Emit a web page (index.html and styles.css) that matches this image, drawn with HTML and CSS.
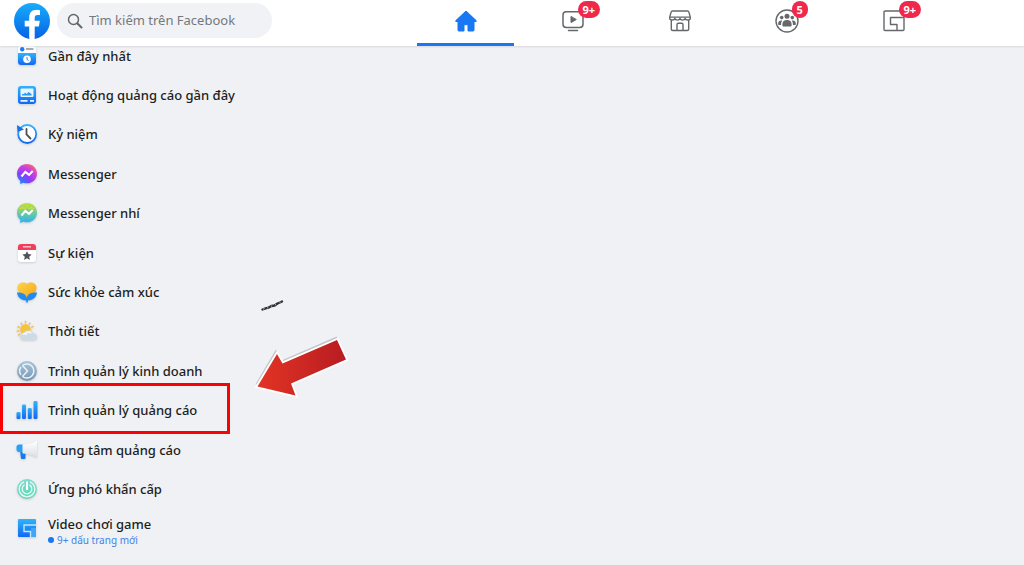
FILE: index.html
```html
<!DOCTYPE html>
<html lang="vi">
<head>
<meta charset="utf-8">
<meta name="viewport" content="width=device-width, initial-scale=1">
<title>Facebook</title>
<link rel="stylesheet" href="styles.css">
</head>
<body>
<svg class="defs" width="0" height="0" aria-hidden="true">
  <defs>
    <linearGradient id="blue" x1="0" y1="0" x2="0" y2="1"><stop offset="0" stop-color="#2fb4fb"/><stop offset="1" stop-color="#1268f3"/></linearGradient>
    <linearGradient id="logo" x1="0" y1="0" x2="0" y2="1"><stop offset="0" stop-color="#18acfb"/><stop offset="1" stop-color="#0563e5"/></linearGradient>
    <radialGradient id="msg" cx=".15" cy="1" r="1.15"><stop offset="0" stop-color="#0a90ff"/><stop offset=".45" stop-color="#8a3cff"/><stop offset=".75" stop-color="#c840e0"/><stop offset="1" stop-color="#ff6a6c"/></radialGradient>
    <linearGradient id="kids" x1="0" y1="0" x2="0" y2="1"><stop offset="0" stop-color="#c6e02a"/><stop offset=".4" stop-color="#7ccf8c"/><stop offset="1" stop-color="#28b2f6"/></linearGradient>
    <linearGradient id="gold" x1="0" y1="0" x2="1" y2="1"><stop offset="0" stop-color="#ffd34a"/><stop offset="1" stop-color="#f5a516"/></linearGradient>
    <linearGradient id="steel" x1="0" y1="0" x2="0" y2="1"><stop offset="0" stop-color="#a9c4da"/><stop offset="1" stop-color="#7797b3"/></linearGradient>
    <linearGradient id="mint" x1="0" y1="0" x2="0" y2="1"><stop offset="0" stop-color="#7fdbd2"/><stop offset="1" stop-color="#5fd6b0"/></linearGradient>
    <linearGradient id="horn" x1="0" y1="0" x2="0" y2="1"><stop offset="0" stop-color="#ffffff"/><stop offset="1" stop-color="#dcdfe3"/></linearGradient>
    <linearGradient id="red" x1="0" y1="0" x2="1" y2="0"><stop offset="0" stop-color="#e23424"/><stop offset="1" stop-color="#b81c22"/></linearGradient>
  </defs>
</svg>

<header class="topbar">
  <div class="brand">
    <a class="logo" href="#" aria-label="Facebook">
      <svg viewBox="0 0 36 36"><circle cx="18" cy="18" r="18" fill="url(#logo)"/><path fill="#fff" d="M15.200 35.800V23.500h-4.500v-5.700h4.500v-3.200c0-5.100 2.800-7.800 7.500-7.800 1.400 0 2.600.2 3.300.4v4.800h-2.400c-2.200 0-2.900 1.100-2.900 2.900v2.900h5.100l-.9 5.700h-4.200v12.300a18 18 0 0 1-5.500 0z"/></svg>
    </a>
    <label class="search">
      <svg viewBox="0 0 16 16" fill="none" stroke="#65676b" stroke-width="1.500" stroke-linecap="round"><circle cx="6.500" cy="6.500" r="5"/><path stroke-width="2" d="M10.500 10.500l4 4"/></svg>
      <input type="search" placeholder="Tìm kiếm trên Facebook" aria-label="Tìm kiếm trên Facebook">
    </label>
  </div>
  <nav class="tabs" aria-label="Chính">
    <a class="tab tab-active" href="#" aria-label="Trang chủ">
      <span class="glyph"><svg viewBox="0 0 24 24"><path fill="#1877f2" stroke="#1877f2" stroke-linejoin="round" d="M12 2L1.800 11.600v.9H4v8.700c0 .5.300.8.800.8H10v-5.500c0-.5.300-.8.800-.8h2.400c.5 0 .8.300.8.800V22h5.200c.5 0 .8-.3.800-.8v-8.700h2.200v-.9z"/></svg></span>
    </a>
    <a class="tab" href="#" aria-label="Video">
      <span class="glyph"><svg viewBox="0 0 24 24" fill="none" stroke="#65676b" stroke-width="1.500" stroke-linecap="round"><rect x="2" y="2.700" width="20" height="15.800" rx="3.200"/><path d="M7.500 21.500h9"/><path fill="#65676b" stroke-linejoin="round" stroke-width="1" d="M10 7.800v5.800l5-2.900z"/></svg><span class="badge">9+</span></span>
    </a>
    <a class="tab" href="#" aria-label="Marketplace">
      <span class="glyph"><svg viewBox="0 0 24 24" fill="none" stroke="#65676b" stroke-width="1.400" stroke-linejoin="round"><path d="M3.300 11v9c0 1 .6 1.500 1.500 1.500h14.400c.9 0 1.500-.5 1.500-1.500v-9M4.500 2h15c.8 0 1.200.4 1.400 1.100l1.400 5v1.200c0 2.200-4.600 2.400-5.200.2-.6 2.200-4.500 2.200-5.100 0-.6 2.200-4.500 2.200-5.100 0-.6 2.200-5.200 2-5.200-.2V8.100l1.400-5C3.300 2.400 3.700 2 4.500 2zM1.700 8.100h20.600M9 21.500v-6c0-.8.400-1.200 1.200-1.200h3.600c.8 0 1.200.4 1.200 1.200v6"/></svg></span>
    </a>
    <a class="tab" href="#" aria-label="Nhóm">
      <span class="glyph"><svg viewBox="0 0 24 24"><circle cx="12" cy="12" r="11" fill="none" stroke="#65676b" stroke-width="1.400"/><g fill="#65676b"><circle cx="12" cy="7.200" r="2.500"/><circle cx="6.700" cy="8.600" r="1.800"/><circle cx="17.300" cy="8.600" r="1.800"/><path d="M7.400 16.500v-1.600c0-2.400 1.900-4 4.600-4s4.600 1.600 4.600 4v1.600c0 .6-.3.900-.9.900H8.300c-.6 0-.9-.3-.9-.9zM6.300 11.400c-2 0-3.100 1.200-3.100 3v.9c0 .4.200.6.600.6h2.300c0-1.700.1-3 1.300-4.400zM17.700 11.400c2 0 3.100 1.200 3.100 3v.9c0 .4-.2.600-.6.600h-2.300c0-1.700-.1-3-1.300-4.400z"/></g></svg><span class="badge">5</span></span>
    </a>
    <a class="tab" href="#" aria-label="Trò chơi">
      <span class="glyph"><svg viewBox="0 0 24 24" fill="none" stroke="#65676b" stroke-width="1.400" stroke-linejoin="round"><path d="M22 8.500V2H3c-.6 0-1 .4-1 1v17.500c0 .6.400 1 1 1h18c.6 0 1-.4 1-1v-12H8.500v7h6.500v6"/></svg><span class="badge">9+</span></span>
    </a>
  </nav>
</header>

<main class="page">
  <nav class="sidebar" aria-label="Lối tắt">
    <ul class="menu">
      <li><a href="#"><svg class="icon" viewBox="0 0 22 22"><rect x="2" y="1" width="18" height="19" rx="3" fill="#fff"/><circle cx="6.200" cy="4.200" r="2.200" fill="#1b7df5"/><path d="M10 4h7.500" stroke="#83878e" stroke-width="1.400"/><path d="M2 8h18v9a3 3 0 0 1-3 3H5a3 3 0 0 1-3-3z" fill="url(#blue)"/><circle cx="11" cy="14.200" r="3.800" fill="#fff"/><path d="M11 12v2.500l1.500 1" stroke="#2385f5" fill="none"/></svg><span>Gần đây nhất</span></a></li>
      <li><a href="#"><svg class="icon" viewBox="0 0 22 22"><rect x="2" y="2" width="18" height="18" rx="3" fill="url(#blue)"/><rect x="4.500" y="4.500" width="13" height="8.500" rx="1" fill="#e8f5ff"/><path d="M6 11.500V10h2l1-1.500 1.500 1.500L12.500 8l3 2v1.500z" fill="#2b99f6"/><path d="M4.500 16.800h7M14 16.800h4" stroke="#e8f5ff" stroke-width="1.800"/></svg><span>Hoạt động quảng cáo gần đây</span></a></li>
      <li><a href="#"><svg class="icon" viewBox="0 0 22 22"><circle cx="11.200" cy="11" r="9" fill="#fff" stroke="url(#blue)" stroke-width="1.800"/><path d="M1 2l.5 7L8 6.500z" fill="#1b6fe8"/><path d="M10.500 6v5.500l4 4" stroke="#4b4f56" stroke-width="1.800" fill="none" stroke-linecap="round"/></svg><span>Kỷ niệm</span></a></li>
      <li><a href="#"><svg class="icon" viewBox="0 0 22 22"><path fill="url(#msg)" d="M11 1C5.300 1 1 5.200 1 10.700c0 2.900 1.200 5.400 3.200 7.100V21l3-1.300c1.200.4 2.400.6 3.800.6 5.700 0 10-4.100 10-9.600S16.700 1 11 1z"/><path d="M5.500 13.500l3.800-4.600 3.700 3 3.700-3.800" fill="none" stroke="#fff" stroke-width="2.100"/></svg><span>Messenger</span></a></li>
      <li><a href="#"><svg class="icon" viewBox="0 0 22 22"><path fill="url(#kids)" d="M11 1C5.300 1 1 5.200 1 10.700c0 2.900 1.200 5.400 3.200 7.100V21l3-1.300c1.200.4 2.400.6 3.800.6 5.700 0 10-4.100 10-9.600S16.700 1 11 1z"/><path d="M4 7l2-2 2 2 3-3 3 3 2-2 2 2" stroke="#e3df35" stroke-width="1.200" stroke-dasharray="2 1" fill="none"/><path d="M5.500 13.500l3.800-4.600 3.700 3 3.700-3.800" fill="none" stroke="#fff" stroke-width="2.100"/></svg><span>Messenger nhí</span></a></li>
      <li><a href="#"><svg class="icon" viewBox="0 0 22 22"><rect x="2" y="2" width="18" height="18" rx="3" fill="#fff"/><path d="M2 8V5a3 3 0 0 1 3-3h12a3 3 0 0 1 3 3v3z" fill="#f03e5e"/><path d="M7 4.800h8" stroke="#ffc4ce" stroke-width="1.400"/><path fill="#505358" d="M11 9.200l1.400 2.900 3.200.4-2.400 2.200.7 3.200-2.900-1.600-2.900 1.600.7-3.200-2.400-2.200 3.200-.4z"/></svg><span>Sự kiện</span></a></li>
      <li><a href="#"><svg class="icon" viewBox="0 0 22 22"><path d="M11 17.500C5 14.500 1.500 11 1.500 6.500 1.500 1.500 8 .2 11 2.700c3-2.500 9.500-1.200 9.500 3.800 0 4.500-3.500 8-9.500 11z" fill="url(#gold)"/><path d="M1 11.500c5-.2 9 1.500 9.700 5.500.7-4 4.300-5.700 10.300-5.500-.5 4.500-3.500 7.800-9 8l-.5 2.300h-1L10 19.500c-5.500-.5-8.500-3.500-9-8z" fill="#208bf1"/></svg><span>Sức khỏe cảm xúc</span></a></li>
      <li><a href="#"><svg class="icon" viewBox="0 0 22 22"><circle cx="9.500" cy="9.500" r="5.400" fill="#f8c33c"/><g stroke="#f4bd4b" stroke-width="1.400"><path d="M9.500.8v2.400M4.800 2.600L6 4.700M1.500 6.500l2.200 1M.8 11h2.400M2 15.300l2-1.300M14.200 2.600L13 4.700M17.500 6.200l-2.200 1.300"/></g><path d="M8 20a3.600 3.600 0 0 1-.2-7.200c.4-2 2.400-3 4.200-2 1.400-1.300 4.600-.4 5 2.400a3.400 3.400 0 0 1 1 6.800z" fill="#cfdbe2"/><path d="M7 14.500c1-1.200 2.300-.8 3-.5.500-2.500 4-3 5-.5" stroke="#f2f6f8" stroke-width="1.800" fill="none"/></svg><span>Thời tiết</span></a></li>
      <li><a href="#"><svg class="icon" viewBox="0 0 22 22"><circle cx="11" cy="11" r="10" fill="url(#steel)"/><path d="M6.500 5.500a7 7 0 1 1 0 11" fill="none" stroke="#eaf2f8" stroke-width="1.500"/><path d="M6.500 5.500l5 5.500-5 5.500M5 7a7 7 0 0 0 0 8" fill="none" stroke="#eaf2f8" stroke-width="1.500"/></svg><span>Trình quản lý kinh doanh</span></a></li>
      <li class="marked"><a href="#"><svg class="icon" viewBox="0 0 22 22" fill="url(#blue)"><rect x=".5" y="13" width="4" height="7" rx="1.300"/><rect x="6" y="5.500" width="4" height="14.500" rx="1.300"/><rect x="11.800" y="9" width="4" height="11" rx="1.300"/><rect x="17.500" y="2" width="4" height="18" rx="1.300"/></svg><span>Trình quản lý quảng cáo</span></a></li>
      <li><a href="#"><svg class="icon" viewBox="0 0 22 22"><path d="M4 10.500h5.500v8.300c0 .8-.5 1.200-1.200 1.200H6.200c-.8 0-1.200-.4-1.400-1.200z" fill="#1877f2"/><path d="M7 5.500H3C1.500 5.500.5 6.500.5 8v2.500c0 1.500 1 2.500 2.500 2.500h4z" fill="#27a0f8"/><path d="M6.500 5.500C12 5.500 16 4.500 21 1.500v17c-5-3-9-4-14.500-4z" fill="url(#horn)"/></svg><span>Trung tâm quảng cáo</span></a></li>
      <li><a href="#"><svg class="icon" viewBox="0 0 22 22"><circle cx="11" cy="11" r="10" fill="url(#mint)"/><g fill="none" stroke="#e6faf4" stroke-width="1.300"><path d="M8 3.800a7.800 7.800 0 1 0 6 0"/><path d="M8.500 6.900a4.800 4.800 0 1 0 5 0"/><path d="M11 3.500v8.500" stroke-width="2" stroke="#fff"/></g></svg><span>Ứng phó khẩn cấp</span></a></li>
      <li><a href="#"><svg class="icon" viewBox="0 0 22 22"><rect x="2" y="2" width="18" height="18" rx="1" fill="url(#blue)"/><path d="M15 14.500v-3.500h5v9h-5z" fill="#41a6f7"/><path d="M20 8H8v6.500h6.500V20" fill="none" stroke="#c6e3fc" stroke-width="1.400"/></svg><span class="stack"><span>Video chơi game</span><span class="note">9+ dấu trang mới</span></span></a></li>
    </ul>
  </nav>
  <svg class="arrow" viewBox="0 0 96 100" aria-hidden="true">
    <path d="M5.500 86.500L25.500 52.500M32 63L86 39.500" fill="none" stroke="#c3c5c9" stroke-width="2"/>
    <path d="M7.500 88.500L27 56l5.500 9.500L87 42l9 19.500-55 24 4.500 12z" transform="translate(-1 0)" fill="url(#red)" stroke="#fff" stroke-width="3.600" paint-order="stroke"/>
    <path d="M11.500 11.500l3-1.200 3-.6 3-1.700 3-.5 3-2 2.500-1 2-1" fill="none" stroke="#303236" stroke-width="2.400" stroke-linecap="round"/>
    <path d="M12 11.200l1.500-.6M16 10l1.200-.5M20 8.300l1.200-.5M24 6.900l1-.5M28.500 4.700l1.200-.5" fill="none" stroke="#c5c7cb" stroke-width=".9"/>
  </svg>
</main>
</body>
</html>
```
FILE: styles.css
```css
*, *::before, *::after { box-sizing: border-box; }

body {
  margin: 0;
  min-height: 100vh;
  display: flex;
  flex-direction: column;
  background: #f0f1f5;
  color: #1c1e21;
  font-family: "Noto Sans", "Open Sans", sans-serif;
  font-size: 13px;
}

a { color: inherit; text-decoration: none; }
.defs { position: absolute; }

.topbar {
  position: sticky;
  top: 0;
  z-index: 2;
  display: grid;
  grid-template-columns: 412fr 535fr 77fr;
  height: 46px;
  background: #fff;
  box-shadow: 0 1px 2px rgba(0, 0, 0, 0.1);
}

.brand {
  display: flex;
  align-items: flex-start;
  gap: 7px;
  padding: 3px 0 0 14px;
}

.logo, .logo svg { display: block; width: 36px; height: 36px; }

.search {
  display: flex;
  align-items: center;
  gap: 6px;
  width: 215px;
  height: 35px;
  padding: 0 10px;
  border-radius: 18px;
  background: #f0f2f5;
}

.search svg { flex: none; width: 16px; height: 16px; }

.search input {
  flex: 1;
  min-width: 0;
  padding: 0 0 1px;
  border: 0;
  outline: 0;
  background: transparent;
  color: #1c1e21;
  font: inherit;
}

.search input::placeholder { color: #75787d; opacity: 1; }

.tabs { display: grid; grid-template-columns: repeat(5, 1fr); }

.tab {
  display: flex;
  align-items: center;
  justify-content: center;
  margin: 0 5px;
  padding-bottom: 2px;
  border-bottom: 3px solid transparent;
}

.tab-active { border-bottom-color: #1877f2; }
.glyph { position: relative; }
.glyph svg { display: block; width: 24px; height: 24px; }

.badge {
  position: absolute;
  left: 17px;
  top: -8px;
  min-width: 16px;
  height: 17px;
  padding: 0 5px;
  border-radius: 9px;
  background: #f02849;
  color: #fff;
  font-size: 11px;
  font-weight: 700;
  line-height: 17px;
  text-align: center;
}

.page {
  position: relative;
  flex: 1;
  display: flex;
}

.sidebar { display: flex; width: 264px; }

.menu {
  flex: 1;
  display: flex;
  flex-direction: column;
  margin: -10px 0 0;
  padding: 0 0 17px;
  list-style: none;
}

.menu li { flex: 1; display: flex; position: relative; }

.menu a {
  flex: 1;
  display: flex;
  align-items: center;
  gap: 10px;
  min-height: 39px;
  padding-left: 16px;
  font-weight: 500;
  line-height: 18px;
  white-space: nowrap;
}

.icon {
  flex: none;
  width: 22px;
  height: 22px;
  filter: drop-shadow(0 1px 1px rgba(0, 0, 0, 0.15));
}

.stack {
  display: flex;
  flex-direction: column;
  padding-top: 6px;
}

.note {
  display: flex;
  align-items: center;
  gap: 3px;
  color: #3f83e8;
  font-size: 10px;
  font-weight: 400;
  line-height: 15px;
}

.note::before {
  content: "";
  width: 6px;
  height: 6px;
  border-radius: 50%;
  background: #1b74f2;
}

.marked::after {
  content: "";
  position: absolute;
  left: 0;
  top: -8px;
  bottom: -4px;
  width: 230px;
  border: 3px solid #f90206;
  pointer-events: none;
}

.arrow {
  position: absolute;
  left: 251px;
  top: 252px;
  width: 96px;
  height: 100px;
  overflow: visible;
}
```
